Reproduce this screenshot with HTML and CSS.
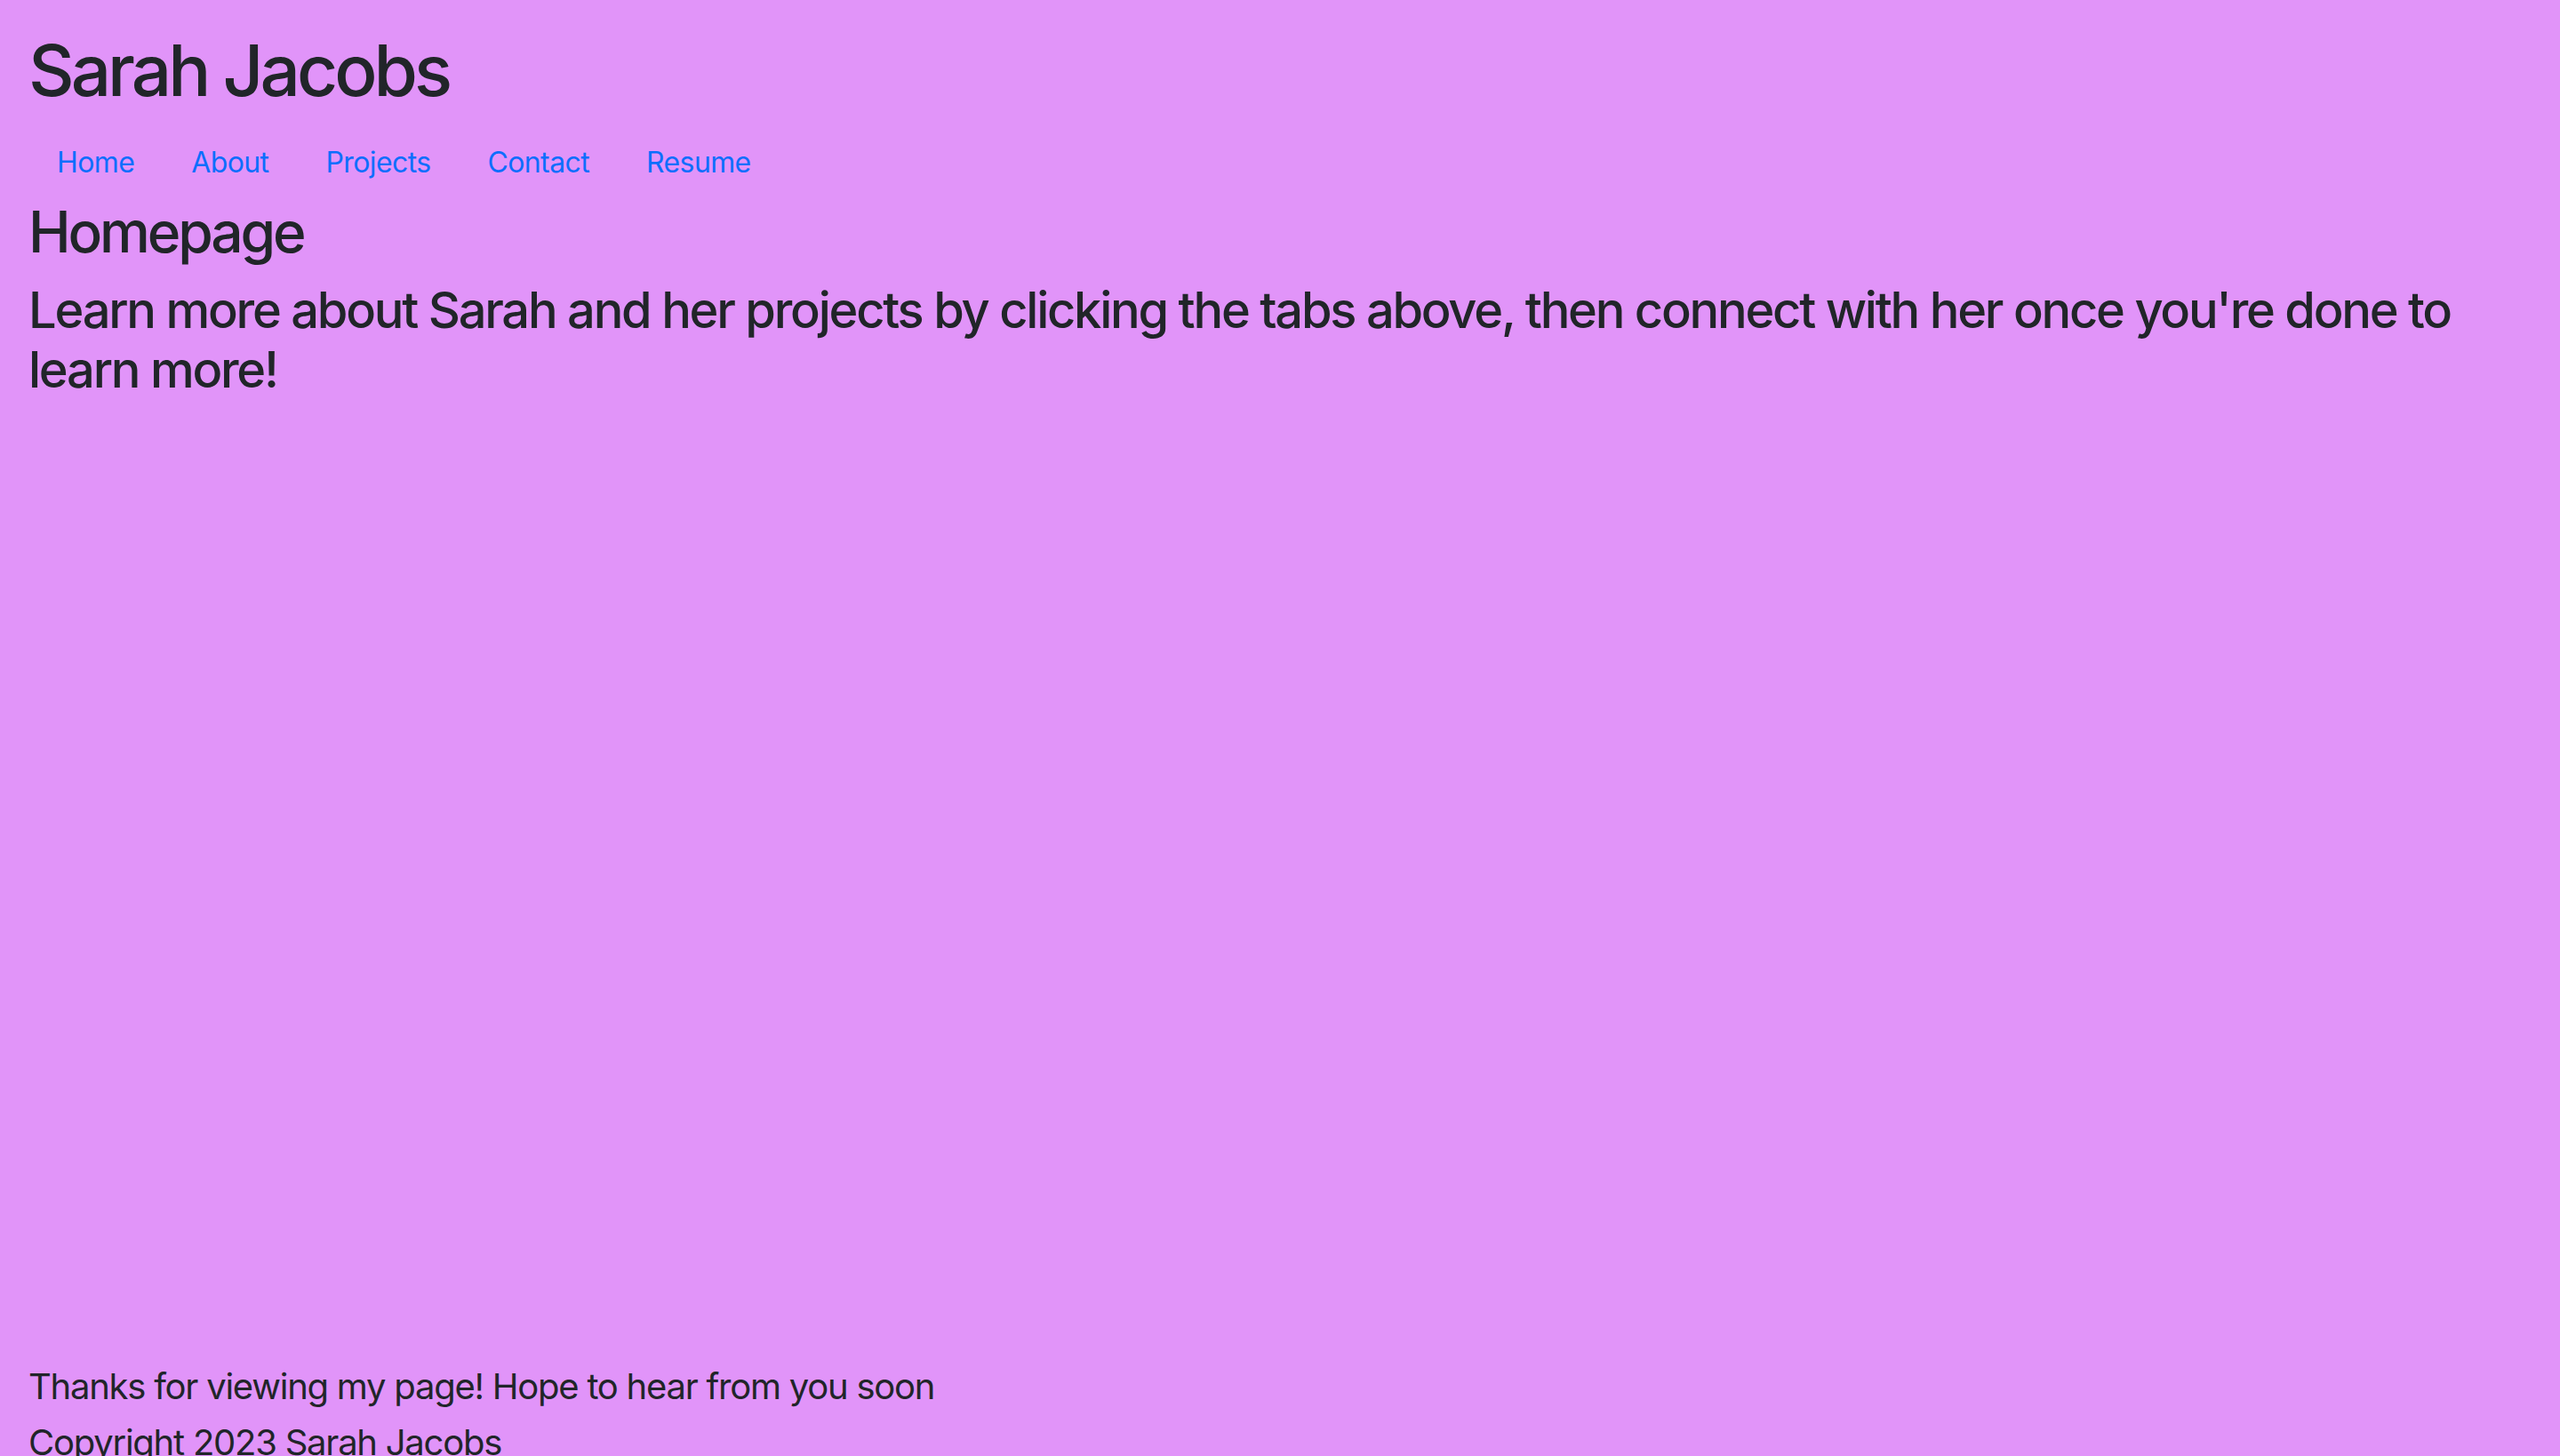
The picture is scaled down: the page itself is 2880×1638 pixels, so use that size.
FILE: index.html
```html
<!DOCTYPE html>
<html lang="en">
<head>
<meta charset="utf-8">
<title>Sarah Jacobs</title>
<link rel="stylesheet" href="styles.css">
</head>
<body>
<div class="page">
  <header class="site-header">
    <h1 class="site-title">Sarah Jacobs</h1>
    <nav>
      <ul class="nav">
        <li><a class="nav-link" href="#">Home</a></li>
        <li><a class="nav-link" href="#">About</a></li>
        <li><a class="nav-link" href="#">Projects</a></li>
        <li><a class="nav-link" href="#">Contact</a></li>
        <li><a class="nav-link" href="#">Resume</a></li>
      </ul>
    </nav>
  </header>
  <main class="main">
    <h2 class="page-title">Homepage</h2>
    <h3 class="lead-text">Learn more about Sarah and her projects by clicking the tabs above, then connect with her once you're done to learn more!</h3>
  </main>
  <footer class="footer">
    <p class="footer-line">Thanks for viewing my page! Hope to hear from you soon</p>
    <p class="footer-line">Copyright 2023 Sarah Jacobs</p>
  </footer>
</div>
</body>
</html>
```

FILE: styles.css
```css
html, body {
  margin: 0;
  padding: 0;
}
body {
  background: #e194f9;
  color: #212529;
  font-family: Inter, "Noto Sans", "Liberation Sans", sans-serif;
  font-size: 32px;
  line-height: 1.5;
}
.page {
  padding: 31px 32px 0;
}
.site-title {
  margin: 0 0 16px;
  font-size: 80px;
  font-weight: 500;
  line-height: 1.2;
  letter-spacing: -0.05em;
}
.nav {
  display: flex;
  flex-wrap: wrap;
  list-style: none;
  margin: 0;
  padding: 0;
}
.nav-link {
  display: block;
  padding: 16px 32px;
  color: #0d6efd;
  text-decoration: none;
  font-size: 32px;
  line-height: 1.5;
  letter-spacing: -0.019em;
}
.main {
  min-height: 1305px;
}
.page-title {
  margin: 0 0 16px;
  font-size: 64px;
  font-weight: 500;
  line-height: 1.2;
  letter-spacing: -0.049em;
}
.lead-text {
  margin: 0 0 16px;
  font-size: 56px;
  font-weight: 500;
  line-height: 1.2;
  letter-spacing: -0.04em;
}
.footer-line {
  margin: 0;
  font-size: 40px;
  line-height: 63px;
  letter-spacing: -0.031em;
}
```
